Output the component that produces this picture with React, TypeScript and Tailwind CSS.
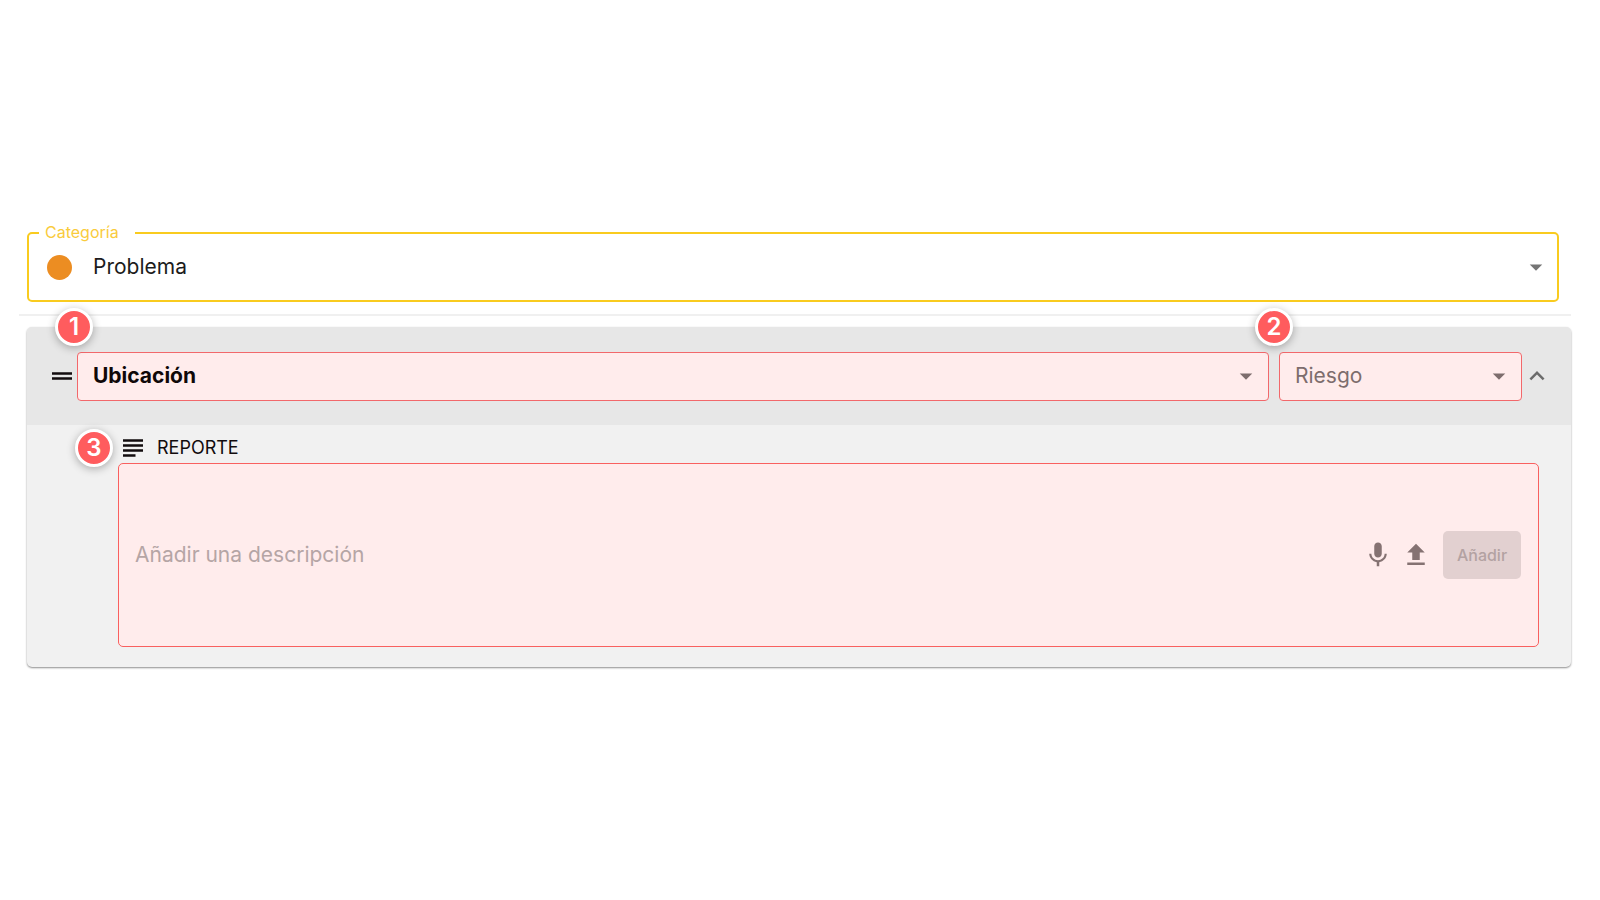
import React, { useState } from "react";
import {
  MdArrowDropDown,
  MdDragHandle,
  MdExpandLess,
  MdFileUpload,
  MdMic,
  MdSubject,
} from "react-icons/md";

const categories = ["Problema", "Observación", "Mejora"];
const locations = ["Planta baja", "Primer piso", "Azotea"];
const risks = ["Bajo", "Medio", "Alto"];

function Badge({ number, className }: { number: number; className: string }) {
  return (
    <span
      className={`absolute z-10 flex size-[38px] items-center justify-center rounded-full border-3 border-white bg-[#ff5c5e] text-2xl leading-none font-semibold text-white shadow-[0_2px_8px_rgba(0,0,0,0.3)] ${className}`}
    >
      {number}
    </span>
  );
}

type SelectFieldProps = {
  label: string;
  options: string[];
  className: string;
};

// The first option doubles as the placeholder of the field
function SelectField({ label, options, className }: SelectFieldProps) {
  return (
    <div className="relative">
      <select
        aria-label={label}
        defaultValue=""
        className={`block h-[49px] w-full appearance-none rounded-sm border border-[#f2686b] bg-[#ffecec] pr-10 pl-[15px] outline-none ${className}`}
      >
        <option value="">{label}</option>
        {options.map((option) => (
          <option key={option}>{option}</option>
        ))}
      </select>
      <MdArrowDropDown
        size={30}
        className="pointer-events-none absolute top-[9px] right-2 text-[#7d6d6d]"
      />
    </div>
  );
}

export default function App() {
  const [description, setDescription] = useState("");
  const [open, setOpen] = useState(true);

  return (
    <main className="flex min-h-screen flex-col justify-center bg-white pr-[29px] pb-3 pl-[19px] font-['Inter',sans-serif] text-[#1c1c1c]">
      <fieldset className="relative mr-3 ml-2 rounded-[5px] border-2 border-[#f9cb1f]">
        <legend className="ml-[10px] w-24 pl-[6px] text-base leading-6 text-[#f9cb3c]">
          <label htmlFor="category" className="block pb-[2px] leading-[22px]">
            Categoría
          </label>
        </legend>
        <div className="-mt-[11px] flex h-[66px] items-center pl-[18px]">
          <span className="size-[25px] shrink-0 rounded-full bg-[#ec8d22]" />
          <select
            id="category"
            className="h-full w-full appearance-none bg-transparent pl-[21px] text-[21px] outline-none"
          >
            {categories.map((category) => (
              <option key={category}>{category}</option>
            ))}
          </select>
        </div>
        <MdArrowDropDown
          size={30}
          className="pointer-events-none absolute right-[6px] bottom-[18px] text-[#757575]"
        />
      </fieldset>

      <hr className="mt-3 border-t-2 border-[#f0f0f0]" />

      <section className="mt-[11px] ml-2 rounded-[5px] bg-[#f1f1f1] shadow-[0_1px_2px_rgba(0,0,0,0.45)]">
        <header className="relative flex h-[98px] items-center rounded-t-[5px] bg-[#e7e7e7] pr-[19px] pl-5">
          <Badge number={1} className="-top-[19px] left-7" />
          <MdDragHandle size={30} className="shrink-0 text-[#120c0e]" />
          <div className="grow">
            <SelectField
              label="Ubicación"
              options={locations}
              className="text-[21px] font-bold text-[#100808]"
            />
          </div>
          <div className="relative ml-[10px] w-[243px]">
            <Badge number={2} className="-top-[44px] -left-[24px]" />
            <SelectField
              label="Riesgo"
              options={risks}
              className="text-[21px] text-[#7d6d6d]"
            />
          </div>
          <button
            type="button"
            aria-label="Contraer"
            onClick={() => setOpen(!open)}
            className="shrink-0 text-[#6b6b6b]"
          >
            <MdExpandLess size={30} />
          </button>
        </header>

        {open && (
          <div className="relative pt-2 pr-8 pb-5 pl-[91px]">
            <Badge number={3} className="top-1 left-12" />
            <label htmlFor="report" className="flex h-[30px] items-center text-lg text-[#120c0e]">
              <MdSubject size={30} className="mr-[9px]" />
              REPORTE
            </label>
            <div className="flex h-[184px] items-center rounded-[5px] border border-[#f9605f] bg-[#ffecec] pr-[17px] pl-4">
              <textarea
                id="report"
                rows={1}
                value={description}
                onChange={(e) => setDescription(e.target.value)}
                placeholder="Añadir una descripción"
                className="block grow resize-none bg-transparent text-[21px] outline-none placeholder:text-[#b5a5a5]"
              />
              <button type="button" aria-label="Grabar audio" className="text-[#857272]">
                <MdMic size={30} />
              </button>
              <button
                type="button"
                aria-label="Subir archivo"
                className="mr-3 ml-2 text-[#857272]"
              >
                <MdFileUpload size={30} />
              </button>
              <button
                type="button"
                disabled
                className="h-12 w-[78px] rounded-[5px] bg-[#e2d0d0] text-base font-medium text-[#b3a2a2]"
              >
                Añadir
              </button>
            </div>
          </div>
        )}
      </section>
    </main>
  );
}
